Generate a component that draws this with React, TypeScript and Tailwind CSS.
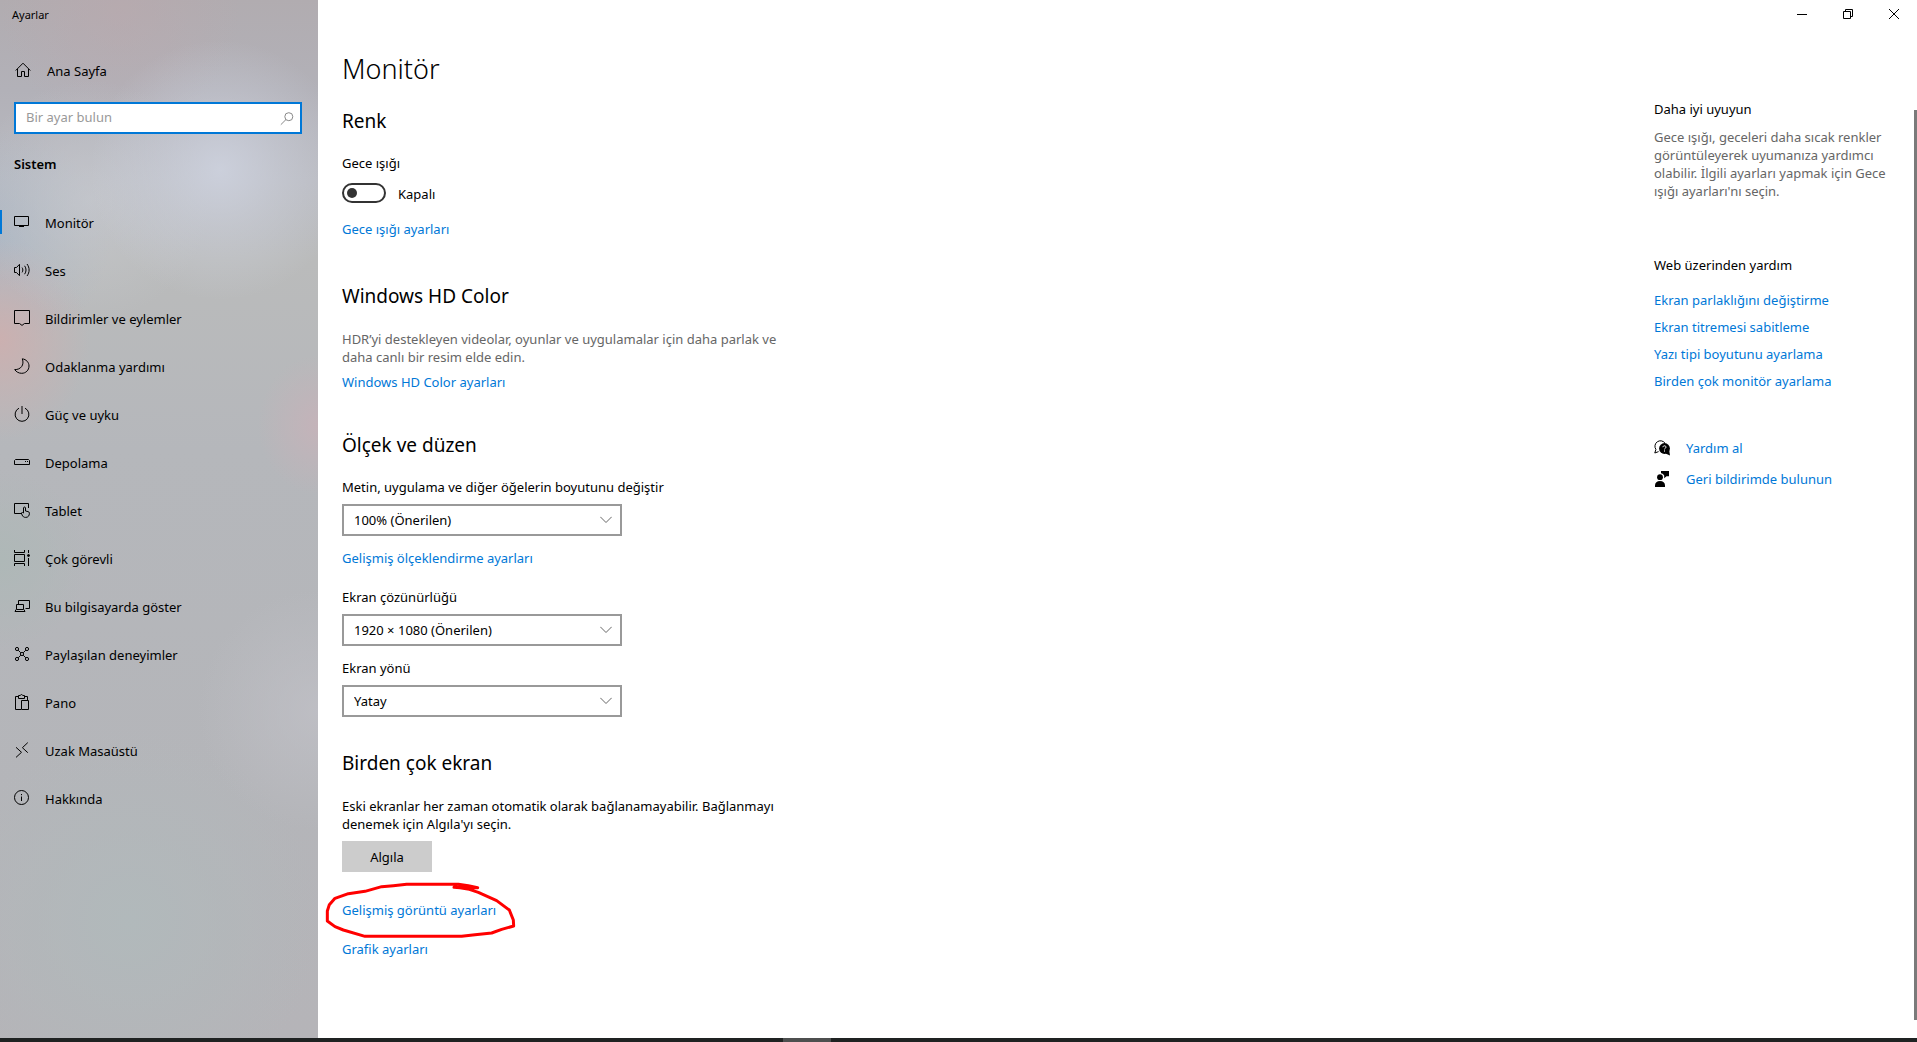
import { useState } from 'react';
import type { ReactNode } from 'react';

function Icon({ children }: { children: ReactNode }) {
  return (
    <svg
      viewBox="0 0 16 16"
      className="h-4 w-4 shrink-0"
      fill="none"
      stroke="currentColor"
      strokeWidth="1"
      aria-hidden="true"
    >
      {children}
    </svg>
  );
}

const navItems: { label: string; icon: ReactNode }[] = [
  {
    label: 'Monitör',
    icon: (
      <>
        <path d="M.5 2.5h14v9H.5z" />
        <path d="M7.5 11.5v1M5 12.5h5" />
      </>
    ),
  },
  {
    label: 'Ses',
    icon: (
      <>
        <path d="M.5 5.5h2l3-3.2v11.4l-3-3.2h-2z" />
        <path d="M8.1 5.6c1 1.5 1 3.3 0 4.8M10.6 3.8c1.9 2.6 1.9 5.8 0 8.4M13 2c2.8 3.7 2.8 8.3 0 12" />
      </>
    ),
  },
  {
    label: 'Bildirimler ve eylemler',
    icon: <path d="M.5.5h15v13h-5L8 15.4 5.5 13.5H.5z" />,
  },
  {
    label: 'Odaklanma yardımı',
    icon: <path d="M8.3.8c4 .6 6.7 3.6 6.7 7.2 0 4.2-3.2 7.3-7.3 7.3-3 0-5.4-1.4-7-3.7C6.7 11.8 10.6 7 8.3.8z" />,
  },
  {
    label: 'Güç ve uyku',
    icon: (
      <>
        <path d="M5 2.2A6.9 6.9 0 1 0 11 2.2" />
        <path d="M8 0v8" />
      </>
    ),
  },
  {
    label: 'Depolama',
    icon: (
      <>
        <path d="M1.5 5.5h13l1 1v4h-15v-4z" />
        <path d="M11 7.5h1M13 7.5h1" />
      </>
    ),
  },
  {
    label: 'Tablet',
    icon: (
      <>
        <path d="M7 11.5H.5v-10h14v4.5" />
        <path d="M9.5 11V6c0-1.300 2-1.300 2 0v3l2.600.6c.9.2 1.300.7 1.300 1.600 0 2.600-1.300 4.200-3.700 4.200-1.900 0-2.900-.8-3.600-2.400l-.8-2c.7-.8 1.600-.6 2.200 0z" />
      </>
    ),
  },
  {
    label: 'Çok görevli',
    icon: (
      <>
        <path d="M.5 4.5h10v7H.5z" />
        <path d="M.5 0v2.5h10V0M.5 16v-2.5h10V16M14.5 0v3M14.5 8v8" />
        <circle cx="14.5" cy="5.5" r="1" fill="currentColor" />
      </>
    ),
  },
  {
    label: 'Bu bilgisayarda göster',
    icon: (
      <>
        <path d="M4.5 6V2.5h11v8h-4" />
        <path d="M2.5 6.5h7v5h-7zM2 11.5l-1 2h10l-1-2" />
      </>
    ),
  },
  {
    label: 'Paylaşılan deneyimler',
    icon: (
      <>
        <circle cx="3" cy="3" r="1.6" />
        <circle cx="13" cy="3" r="1.6" />
        <circle cx="3" cy="13" r="1.6" />
        <circle cx="13" cy="13" r="1.6" />
        <circle cx="8" cy="8" r="1.6" />
        <path d="M4.2 4.2l2.6 2.6M11.8 4.2 9.2 6.8M4.2 11.8l2.6-2.6M11.8 11.8 9.2 9.2" />
      </>
    ),
  },
  {
    label: 'Pano',
    icon: (
      <>
        <path d="M7 15.5H1.5v-13H4M11 2.5h2.5V6" />
        <path d="M4.5 4.5v-3h1.8c.3-1.3 2.100-1.3 2.400 0h1.800v3z" />
        <path d="M7.5 6.5h7v9h-7z" />
      </>
    ),
  },
  {
    label: 'Uzak Masaüstü',
    icon: <path d="M2 5.3l5.5 5L2 15.4M13.8.6 8.4 5.7l5.4 5" />,
  },
  {
    label: 'Hakkında',
    icon: (
      <>
        <circle cx="7.5" cy="7.5" r="7" />
        <path d="M7.5 6.5V11M7.5 4v1.2" />
      </>
    ),
  },
];

function Link({ children, className = '' }: { children: ReactNode; className?: string }) {
  return (
    <a href="#" className={'block w-fit text-[#0078d7] hover:text-gray-500 ' + className}>
      {children}
    </a>
  );
}

function Heading({ children, className = '' }: { children: ReactNode; className?: string }) {
  return <h2 className={'text-[19px] leading-7 ' + className}>{children}</h2>;
}

function SelectField({
  id,
  label,
  options,
  className = '',
}: {
  id: string;
  label: string;
  options: string[];
  className?: string;
}) {
  return (
    <div className={className}>
      <label htmlFor={id} className="block">
        {label}
      </label>
      <div className="relative mt-2 w-[280px]">
        <select
          id={id}
          className="block h-8 w-full appearance-none border-2 border-[#999] bg-white pr-10 pl-2.5 outline-none focus:border-[#666]"
        >
          {options.map((option) => (
            <option key={option}>{option}</option>
          ))}
        </select>
        <svg
          viewBox="0 0 12 8"
          className="pointer-events-none absolute top-3 right-2.5 h-2 w-3 text-[#666]"
          fill="none"
          stroke="currentColor"
          aria-hidden="true"
        >
          <path d="M.3.8 6 6.5 11.7.8" />
        </svg>
      </div>
    </div>
  );
}

function Sidebar() {
  return (
    <aside className="flex w-[318px] shrink-0 flex-col bg-[#b5b6ba] bg-[radial-gradient(circle_at_220px_170px,#d0d5e2cc_0,#d0d5e266_60px,transparent_130px),radial-gradient(circle_at_90px_200px,#c9ccd299_0,transparent_120px),radial-gradient(ellipse_90px_100px_at_0px_340px,#cbb0b0_0,#cbb0b077_50%,transparent_100%),radial-gradient(ellipse_60px_70px_at_318px_425px,#c4b3b9_0,transparent_100%),radial-gradient(circle_at_0px_240px,#a9b5c4cc_0,transparent_110px),radial-gradient(circle_at_120px_10px,#bba8ad88_0,transparent_120px),radial-gradient(circle_at_318px_710px,#c0c0c6cc_0,transparent_120px),radial-gradient(circle_at_0px_560px,#aeb8b7_0,transparent_90px),radial-gradient(circle_at_130px_920px,#b1b9bb_0,transparent_190px),linear-gradient(#b1acb0_0,#b2b1b8_90px,#b9bac0_180px,#babbbb_260px,#b5b7bb_450px,#b4b5b9_800px,#b5b4b8_100%)]">
      <div className="h-[30px] px-3 text-[11px] leading-[30px]">Ayarlar</div>
      <a href="#" className="mt-5 flex h-10 items-center gap-4 px-[15px]">
        <Icon>
          <path d="M.7 8.5 8 1.2l7.3 7.3M2.5 7v7.500h4v-5h3v5h4V7" />
        </Icon>
        <span className="pt-0.5">Ana Sayfa</span>
      </a>
      <div className="relative mx-3.5 mt-3 mr-4">
        <input
          type="text"
          aria-label="Bir ayar bulun"
          placeholder="Bir ayar bulun"
          className="block h-8 w-full border-2 border-[#0078d7] bg-white pr-9 pb-0.5 pl-2.5 outline-none placeholder:text-[#999]"
        />
        <svg
          viewBox="0 0 14 14"
          className="pointer-events-none absolute top-2.5 right-2 h-3.5 w-3.5 text-[#888]"
          fill="none"
          stroke="currentColor"
          aria-hidden="true"
        >
          <circle cx="8.8" cy="4.7" r="4" />
          <path d="M6 7.5.8 12.7" />
        </svg>
      </div>
      <h2 className="mt-[21px] px-3.5 font-semibold">Sistem</h2>
      <nav className="mt-[26px]">
        {navItems.map((item, index) => (
          <a key={item.label} href="#" className="flex h-12 items-center">
            <span className={index === 0 ? 'mb-0.5 h-6 w-0.5 bg-[#0078d7]' : 'h-6 w-0.5'} />
            <span className="mb-0.5 ml-3">
              <Icon>{item.icon}</Icon>
            </span>
            <span className="ml-[15px]">{item.label}</span>
          </a>
        ))}
      </nav>
    </aside>
  );
}

function WindowButtons() {
  const base = 'flex h-full w-[46px] items-center justify-center';
  return (
    <div className="flex h-[30px] justify-end pb-0.5">
      <button type="button" aria-label="Simge durumuna küçült" className={base + ' hover:bg-gray-200'}>
        <svg viewBox="0 0 10 10" className="h-2.5 w-2.5" stroke="currentColor" fill="none">
          <path d="M0 5.5h10" />
        </svg>
      </button>
      <button type="button" aria-label="Önceki boyuta getir" className={base + ' hover:bg-gray-200'}>
        <svg viewBox="0 0 10 10" className="h-2.5 w-2.5" stroke="currentColor" fill="none">
          <path d="M.5 2.5h7v7h-7zM2.5 2.5v-2h7v7h-2" />
        </svg>
      </button>
      <button type="button" aria-label="Kapat" className={base + ' hover:bg-red-600 hover:text-white'}>
        <svg viewBox="0 0 10 10" className="h-2.5 w-2.5" stroke="currentColor" fill="none">
          <path d="M0 0l10 10M10 0 0 10" />
        </svg>
      </button>
    </div>
  );
}

function DisplaySettings() {
  const [nightLight, setNightLight] = useState(false);
  return (
    <main className="min-w-0 flex-1 px-6 pt-[21px] pb-16">
      <h1 className="text-[27px] leading-9 font-light">Monitör</h1>

      <Heading className="mt-5">Renk</Heading>
      <label htmlFor="night-light" className="mt-[19px] block w-fit">
        Gece ışığı
      </label>
      <div className="mt-[11px] flex h-5 items-center gap-3">
        <input
          id="night-light"
          type="checkbox"
          role="switch"
          checked={nightLight}
          onChange={(event) => setNightLight(event.target.checked)}
          className="flex h-5 w-11 appearance-none items-center rounded-full border-2 border-[#333] px-[3px] before:h-2.5 before:w-2.5 before:rounded-full before:bg-[#333] checked:justify-end checked:border-[#0078d7] checked:bg-[#0078d7] checked:before:bg-white"
        />
        <span className="pt-0.5">{nightLight ? 'Açık' : 'Kapalı'}</span>
      </div>
      <Link className="mt-[17px]">Gece ışığı ayarları</Link>

      <Heading className="mt-11">Windows HD Color</Heading>
      <p className="mt-5 max-w-[450px] text-[#666]">
        HDR’yi destekleyen videolar, oyunlar ve uygulamalar için daha parlak ve daha canlı bir resim elde edin.
      </p>
      <Link className="mt-[7px]">Windows HD Color ayarları</Link>

      <Heading className="mt-10">Ölçek ve düzen</Heading>
      <SelectField
        id="scale"
        className="mt-[19px]"
        label="Metin, uygulama ve diğer öğelerin boyutunu değiştir"
        options={['100% (Önerilen)', '125%', '150%', '175%']}
      />
      <Link className="mt-[13px]">Gelişmiş ölçeklendirme ayarları</Link>
      <SelectField
        id="resolution"
        className="mt-[21px]"
        label="Ekran çözünürlüğü"
        options={['1920 × 1080 (Önerilen)', '1680 × 1050', '1280 × 720']}
      />
      <SelectField id="orientation" className="mt-[13px]" label="Ekran yönü" options={['Yatay', 'Dikey']} />

      <Heading className="mt-8">Birden çok ekran</Heading>
      <p className="mt-5 max-w-[450px]">
        Eski ekranlar her zaman otomatik olarak bağlanamayabilir. Bağlanmayı denemek için Algıla'yı seçin.
      </p>
      <button type="button" className="mt-2 block h-[31px] w-[90px] bg-[#ccc] hover:bg-[#bbb]">
        Algıla
      </button>
      <div className="relative mt-[29px] w-fit">
        <Link>Gelişmiş görüntü ayarları</Link>
        <svg
          viewBox="36 450 600 186"
          className="pointer-events-none absolute -top-[21px] -left-5 h-[62px] w-[200px] max-w-none"
          fill="none"
          stroke="#ff0000"
          strokeWidth="9"
          strokeLinejoin="round"
          strokeLinecap="round"
          aria-hidden="true"
        >
          <path d="M503 473 475 467 445 463H290L250 467 215 470 165 484 115 491 75 505 58 524 52 543V573L75 590 100 600 165 619H455L495 614 545 609 575 598 611 588 610 570 598 540 560 512 505 487 478 478 450 473 432 472 503 473" />
        </svg>
      </div>
      <Link className="mt-[21px]">Grafik ayarları</Link>
    </main>
  );
}

function HelpPanel() {
  return (
    <aside className="w-[263px] shrink-0 pt-[70px] pr-5">
      <h3>Daha iyi uyuyun</h3>
      <p className="mt-2.5 text-[#666]">
        Gece ışığı, geceleri daha sıcak renkler görüntüleyerek uyumanıza yardımcı olabilir. İlgili ayarları yapmak
        için Gece ışığı ayarları'nı seçin.
      </p>
      <h3 className="mt-14">Web üzerinden yardım</h3>
      <div className="mt-[17px] flex flex-col gap-[9px]">
        <Link>Ekran parlaklığını değiştirme</Link>
        <Link>Ekran titremesi sabitleme</Link>
        <Link>Yazı tipi boyutunu ayarlama</Link>
        <Link>Birden çok monitör ayarlama</Link>
      </div>
      <div className="mt-[49px] flex flex-col gap-[13px]">
        <div className="flex items-center gap-4">
          <Icon>
            <path d="M4.6 11.6.8 13l1.100-3.600A5.200 5.200 0 1 1 11 3.200" />
            <circle cx="10.5" cy="8.5" r="5.4" fill="currentColor" stroke="none" />
            <path d="M15.2 10.500 16 15.600l-4.500-2z" fill="currentColor" stroke="none" />
            <path d="M8.900 7.200c.1-1.900 3.200-1.800 3.100 0-.1 1.200-1.500 1-1.500 2.200M10.500 10.400v1.200" stroke="white" />
          </Icon>
          <Link>Yardım al</Link>
        </div>
        <div className="flex items-center gap-4">
          <Icon>
            <g fill="currentColor" stroke="none">
              <circle cx="6" cy="6.2" r="2.9" />
              <path d="M1 16v-1.500C1 11.500 3 10 6 10s5 1.500 5 4.500V16zM7 0h8v5.200h-2.500L10.200 7.300V4.500C9.500 3.200 8.500 2.500 7 2.200z" />
            </g>
          </Icon>
          <Link>Geri bildirimde bulunun</Link>
        </div>
      </div>
    </aside>
  );
}

export default function App() {
  return (
    <div className="flex min-h-screen flex-col bg-white font-['Noto_Sans','Open_Sans',sans-serif] text-[13px] leading-[18px] text-black">
      <div className="flex flex-1">
        <Sidebar />
        <div className="flex min-w-0 flex-1 flex-col">
          <WindowButtons />
          <div className="relative flex flex-1">
            <DisplaySettings />
            <HelpPanel />
            <div className="absolute top-20 right-0 bottom-[18px] w-[3px] bg-[#7a7a7a]" />
          </div>
        </div>
      </div>
      <footer className="flex h-1 bg-[#1f2222]">
        <div className="ml-[783px] w-12 bg-[#4d4f4f]" />
      </footer>
    </div>
  );
}
